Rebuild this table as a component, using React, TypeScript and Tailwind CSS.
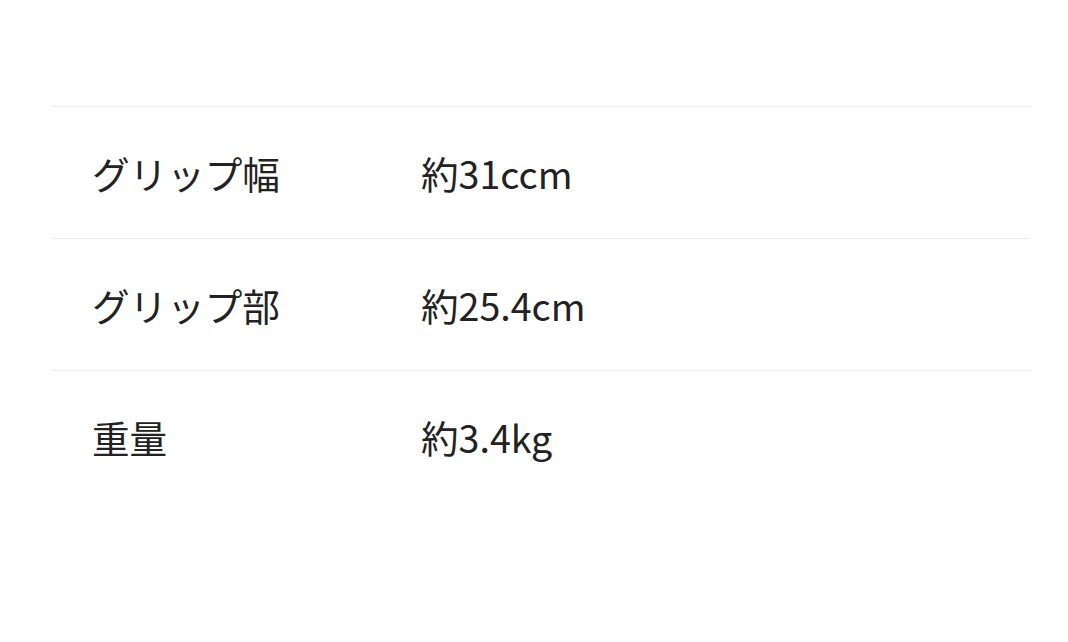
import React from "react";

type Spec = { label: string; value: string };

const specs: Spec[] = [
  { label: "グリップ幅", value: "約31ccm" },
  { label: "グリップ部", value: "約25.4cm" },
  { label: "重量", value: "約3.4kg" },
];

const App: React.FC = () => {
  return (
    <div
      className="min-h-screen w-full bg-white pt-[106px]"
      style={{ fontFamily: '"Noto Sans CJK JP", "Noto Sans", sans-serif' }}
    >
      <div className="ml-[52px] w-[978px]">
        {specs.map((s) => (
          <div
            key={s.label}
            className="flex h-[132px] items-center border-t border-[#ececec] text-[37.6px] text-[#222222]"
          >
            <div className="w-[369px] pl-[40px] leading-none">{s.label}</div>
            <div className="leading-none">{s.value}</div>
          </div>
        ))}
      </div>
    </div>
  );
};

export default App;
